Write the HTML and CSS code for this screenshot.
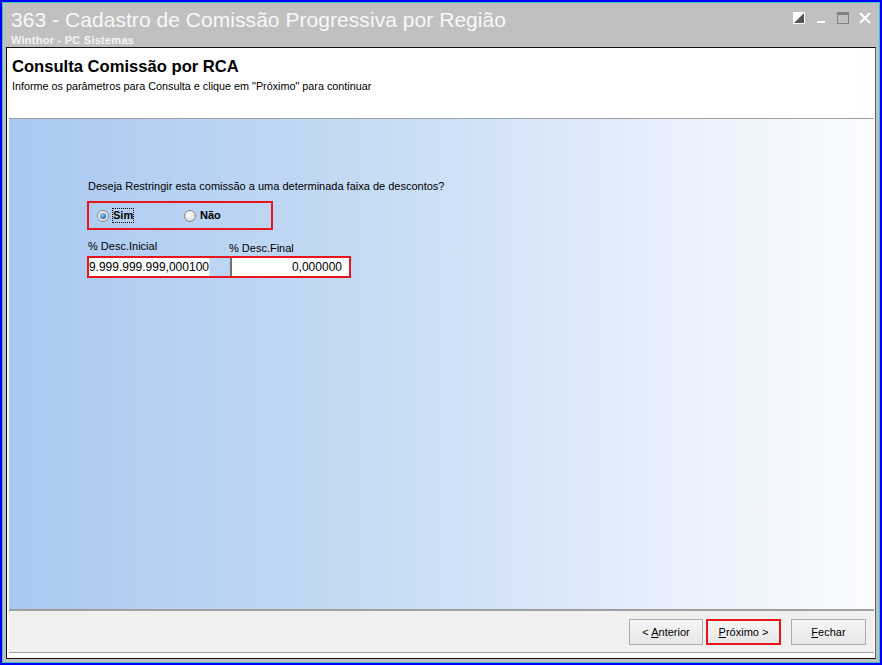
FILE: index.html
```html
<!DOCTYPE html>
<html lang="pt-BR">
<head>
<meta charset="utf-8">
<title>363 - Cadastro de Comissão Progressiva por Região</title>
<link rel="stylesheet" href="styles.css">
</head>
<body>
<div class="window">
  <div class="titlebar">
    <div class="title-texts">
      <div class="title">363 - Cadastro de Comissão Progressiva por Região</div>
      <div class="subtitle">Winthor - PC Sistemas</div>
    </div>
    <div class="win-buttons">
      <svg class="wb" width="12" height="12" viewBox="0 0 12 12"><rect x="0.5" y="0.5" width="11" height="11" fill="#fff" stroke="#fff"/><path d="M1 11 L11 1 L11 11 Z" fill="#555"/></svg>
      <svg class="wb" width="12" height="12" viewBox="0 0 12 12"><rect x="2" y="9" width="8" height="2" fill="#fff"/></svg>
      <svg class="wb" width="12" height="12" viewBox="0 0 12 12"><rect x="0.5" y="0.5" width="11" height="11" fill="none" stroke="#808080"/><rect x="0" y="0" width="12" height="3" fill="#808080"/></svg>
      <svg class="wb" width="12" height="12" viewBox="0 0 12 12"><path d="M1 1 L11 11 M11 1 L1 11" stroke="#fff" stroke-width="2"/></svg>
    </div>
  </div>
  <div class="client">
    <div class="header">
      <h1 class="heading">Consulta Comissão por RCA</h1>
      <p class="hint">Informe os parâmetros para Consulta e clique em "Próximo" para continuar</p>
    </div>
    <div class="panel">
      <div class="form">
        <div class="question">Deseja Restringir esta comissão a uma determinada faixa de descontos?</div>
        <div class="radios hl">
          <label class="radio radio-sim"><span class="dot checked"></span><span class="rtext focus">Sim</span></label>
          <label class="radio"><span class="dot"></span><span class="rtext">Não</span></label>
        </div>
        <div class="labels">
          <span class="lbl lbl-ini">% Desc.Inicial</span>
          <span class="lbl lbl-fin">% Desc.Final</span>
        </div>
        <div class="fields hl">
          <div class="field field-ini"><span>9.999.999.999,000100</span></div>
          <div class="gap"></div>
          <div class="field field-fin"><span>0,000000</span></div>
        </div>
      </div>
    </div>
    <div class="footer">
      <button class="btn prev"><span>&lt; <u>A</u>nterior</span></button>
      <button class="btn primary"><span><u>P</u>róximo &gt;</span></button>
      <button class="btn last"><span><u>F</u>echar</span></button>
    </div>
  </div>
</div>
</body>
</html>
```

FILE: styles.css
```css
html, body {
  margin: 0;
  padding: 0;
  background: #ffffff;
}

.window {
  width: 882px;
  height: 665px;
  box-sizing: border-box;
  border: 2px solid #0000ff;
  background: #c0c0c0;
  box-shadow: inset 0 0 0 1px #3ec2c2;
  display: flex;
  flex-direction: column;
  padding: 0 4px 4px 4px;
  font-family: "Liberation Sans", Arial, sans-serif;
}

.titlebar {
  height: 45px;
  flex: none;
  display: flex;
  justify-content: space-between;
  align-items: flex-start;
  padding-left: 5px;
}

.title {
  margin-top: 6px;
  font-size: 21px;
  line-height: 24px;
  color: #f8f8f8;
  letter-spacing: 0.05px;
}

.subtitle {
  margin-top: 2px;
  font-size: 11px;
  font-weight: bold;
  line-height: 13px;
  color: #f4f4f4;
  letter-spacing: 0.25px;
}

.win-buttons {
  display: flex;
  gap: 10px;
  margin-top: 10px;
  margin-right: 5px;
}

.wb {
  display: block;
}

.client {
  flex: 1;
  background: #ffffff;
  border: 1px solid #101010;
  border-right-color: #606060;
  display: flex;
  flex-direction: column;
  padding: 0 1px 0 2px;
  min-height: 0;
}

.header {
  height: 70px;
  flex: none;
  border-bottom: 1px solid #a0a0a0;
  padding-left: 3px;
}

.heading {
  margin: 9px 0 0 0;
  font-size: 16.6px;
  line-height: 20px;
  font-weight: bold;
  color: #000000;
}

.hint {
  margin: 3px 0 0 0;
  font-size: 10.8px;
  line-height: 13px;
  color: #000000;
}

.panel {
  flex: 1;
  background: linear-gradient(to right, #a9c9f1 0%, #c4daf4 40%, #e6effb 75%, #fbfcfe 100%);
  border-bottom: 2px solid #a0a0a0;
  min-height: 0;
}

.form {
  padding: 61px 0 0 79px;
  font-size: 11px;
  color: #000000;
}

.question {
  line-height: 13px;
}

.hl {
  border: 2px solid #e8141e;
  box-sizing: border-box;
}

.radios {
  width: 186px;
  height: 29px;
  margin: 8px 0 0 -1px;
  display: flex;
  align-items: center;
  padding-left: 8px;
}

.radio {
  display: flex;
  align-items: center;
  font-weight: bold;
}

.radio-sim {
  width: 87px;
}

.dot {
  width: 12px;
  height: 12px;
  border-radius: 50%;
  border: 1px solid #8a8a8a;
  background: radial-gradient(circle at 40% 35%, #ffffff 0%, #e4e4e4 60%, #cfcfcf 100%);
  box-sizing: border-box;
  margin-right: 3px;
  position: relative;
}

.dot.checked::after {
  content: "";
  position: absolute;
  left: 2px;
  top: 2px;
  width: 6px;
  height: 6px;
  border-radius: 50%;
  background: radial-gradient(circle at 40% 35%, #8fd0ff 0%, #1f6fb8 70%, #0d4f90 100%);
}

.rtext {
  padding: 1px 1px;
  line-height: 13px;
}

.rtext.focus {
  outline: 1px dotted #000000;
  outline-offset: -1px;
}

.labels {
  display: flex;
  margin-top: 10px;
  height: 14px;
}

.lbl {
  line-height: 13px;
}

.lbl-ini {
  width: 141px;
}

.lbl-fin {
  padding-top: 2px;
}

.fields {
  width: 264px;
  height: 22px;
  margin: 2px 0 0 -1px;
  display: flex;
}

.field {
  background: #ffffff;
  height: 18px;
  overflow: hidden;
  display: flex;
  justify-content: flex-end;
  align-items: center;
  font-size: 12px;
  color: #000000;
  white-space: nowrap;
}

.field-ini {
  width: 120px;
}

.gap {
  width: 21px;
  height: 18px;
  background: #bcd5f2;
  border-left: 1px solid #d8e4f4;
  box-sizing: border-box;
}

.field-fin {
  width: 119px;
  border-left: 2px solid #707070;
  box-sizing: border-box;
  padding-right: 7px;
}

.footer {
  height: 41px;
  flex: none;
  background: #f0f0f0;
  border-bottom: 1px solid #a0a0a0;
  display: flex;
  justify-content: flex-end;
  align-items: center;
  padding-right: 8px;
  margin-bottom: 5px;
}

.btn {
  width: 75px;
  height: 26px;
  margin-left: 3px;
  background: linear-gradient(#f6f6f6, #e6e6e6);
  border: 1px solid #acacac;
  font-family: "Liberation Sans", Arial, sans-serif;
  font-size: 11px;
  color: #000000;
  padding: 0;
}

.btn.prev {
  width: 74px;
}

.btn.primary {
  border: 2px solid #e8141e;
}

.btn.last {
  margin-left: 10px;
}
```
